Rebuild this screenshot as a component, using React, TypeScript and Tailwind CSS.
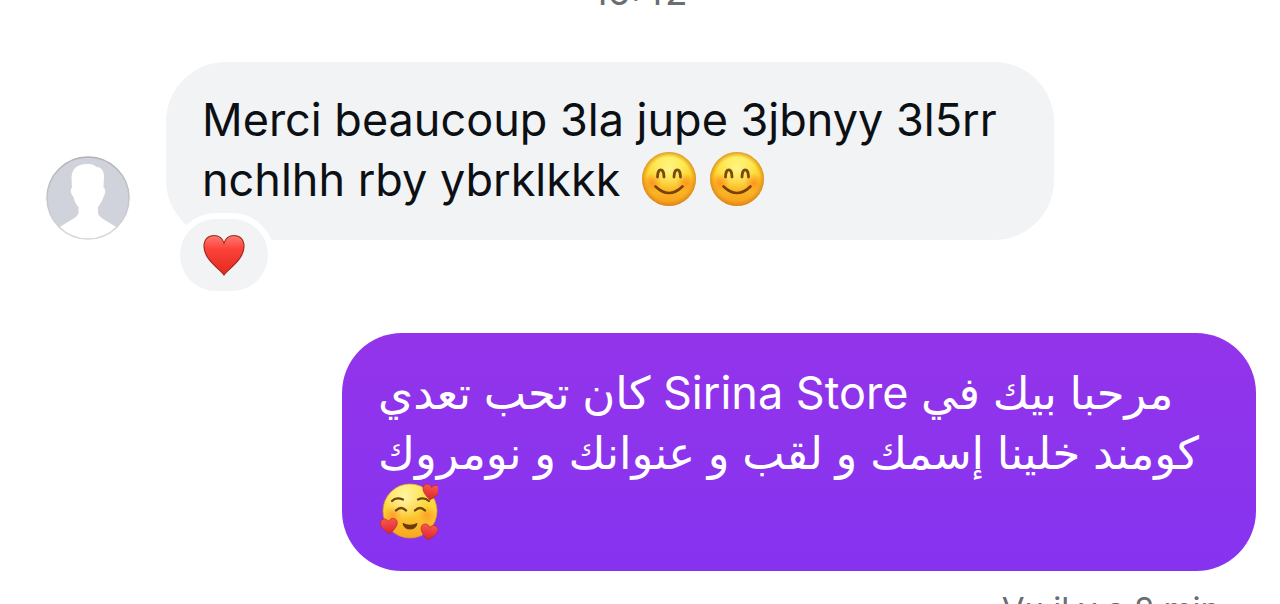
import React from "react";

interface EmojiProps {
  className?: string;
}

function DefaultAvatar() {
  return (
    <svg viewBox="0 0 84 84" role="img" aria-label="Photo de profil" className="w-[84px] h-[84px] shrink-0">
      <defs>
        <clipPath id="avatar-clip">
          <circle cx="42" cy="42" r="41" />
        </clipPath>
        <linearGradient id="avatar-ring" x1="0" y1="0" x2="0" y2="1">
          <stop offset="0" stopColor="#b0b1b6" />
          <stop offset="1" stopColor="#d8d8da" />
        </linearGradient>
      </defs>
      <circle cx="42" cy="42" r="41" fill="#d0d3dc" />
      <path
        clipPath="url(#avatar-clip)"
        fill="#fff"
        d="M41 8C46 7.500 49 9 50.500 11C55.500 11 58 15 58 21L57.500 32C60 32 59.500 38 57.500 41C56 46 54 48 52 51V57C52 62 64 66 70 71L84 84H0L14 71C20 66 32 62 32.500 57V51C30 48 28.500 46 27.500 41C24.500 38 24 32 26 32L25.500 22C26 12 31 8.500 41 8Z"
      />
      <circle cx="42" cy="42" r="41" fill="none" stroke="url(#avatar-ring)" strokeWidth="1.500" />
    </svg>
  );
}

function SmileEmoji({ className }: EmojiProps) {
  return (
    <svg viewBox="0 0 56 56" role="img" aria-label="😊" className={className}>
      <defs>
        <linearGradient id="smile-face" x1="0" y1="0" x2="0" y2="1">
          <stop offset="0" stopColor="#fdf04a" />
          <stop offset="0.45" stopColor="#fdd42e" />
          <stop offset="1" stopColor="#f79a1c" />
        </linearGradient>
        <radialGradient id="smile-glow" cx="0.5" cy="0.3" r="0.4">
          <stop offset="0" stopColor="#fffb9a" stopOpacity="0.8" />
          <stop offset="1" stopColor="#fffb9a" stopOpacity="0" />
        </radialGradient>
        <radialGradient id="smile-shade">
          <stop offset="0.8" stopColor="#e88b10" stopOpacity="0" />
          <stop offset="1" stopColor="#d07a1c" stopOpacity="0.75" />
        </radialGradient>
        <radialGradient id="smile-cheek">
          <stop offset="0" stopColor="#fb7a18" stopOpacity="0.65" />
          <stop offset="1" stopColor="#fb7a18" stopOpacity="0" />
        </radialGradient>
      </defs>
      <circle cx="28" cy="27" r="27" fill="url(#smile-face)" />
      <circle cx="28" cy="27" r="27" fill="url(#smile-glow)" />
      <circle cx="11" cy="31" r="10" fill="url(#smile-cheek)" />
      <circle cx="45" cy="31" r="10" fill="url(#smile-cheek)" />
      <circle cx="28" cy="27" r="27" fill="url(#smile-shade)" />
      <path
        d="M16.500 25C16.500 15.500 23 15.500 23 25M33 25C33 15.500 39.500 15.500 39.500 25"
        fill="none"
        stroke="#7a4a0c"
        strokeWidth="2.800"
        strokeLinecap="round"
      />
      <path d="M14.500 34.500Q28 47.500 41.500 34.500" fill="none" stroke="#7a400a" strokeWidth="2.600" strokeLinecap="round" />
    </svg>
  );
}

function SmallHeart({ transform }: { transform: string }) {
  return (
    <g transform={transform}>
      <path
        d="M0 8C-4 5 -8.500 1 -8.500 -3C-8.500 -8 -2 -9 0 -4.500C2 -9 8.500 -8 8.500 -3C8.500 1 4 5 0 8Z"
        fill="url(#love-heart)"
        stroke="#b92326"
        strokeWidth="0.600"
      />
    </g>
  );
}

function LoveEmoji({ className }: EmojiProps) {
  return (
    <svg viewBox="0 0 60 60" role="img" aria-label="🥰" className={className}>
      <defs>
        <linearGradient id="love-face" x1="0" y1="0" x2="0" y2="1">
          <stop offset="0" stopColor="#fdec56" />
          <stop offset="0.5" stopColor="#fdcf35" />
          <stop offset="1" stopColor="#f9a51f" />
        </linearGradient>
        <radialGradient id="love-glow" cx="0.4" cy="0.25" r="0.4">
          <stop offset="0" stopColor="#fffac0" stopOpacity="0.8" />
          <stop offset="1" stopColor="#fffac0" stopOpacity="0" />
        </radialGradient>
        <radialGradient id="love-cheek">
          <stop offset="0" stopColor="#fb8423" stopOpacity="0.6" />
          <stop offset="1" stopColor="#fb8423" stopOpacity="0" />
        </radialGradient>
        <linearGradient id="love-heart" x1="0" y1="0" x2="0" y2="1">
          <stop offset="0" stopColor="#f95650" />
          <stop offset="1" stopColor="#d8262c" />
        </linearGradient>
      </defs>
      <circle cx="32" cy="28" r="27" fill="url(#love-face)" stroke="#e09a22" strokeWidth="0.800" />
      <circle cx="32" cy="28" r="27" fill="url(#love-glow)" />
      <circle cx="15" cy="32" r="9" fill="url(#love-cheek)" />
      <circle cx="49" cy="32" r="9" fill="url(#love-cheek)" />
      <g fill="none" stroke="#6b430d" strokeLinecap="round">
        <path d="M14 18Q18 13.500 25 16.500M40 16.500Q46 13.500 51 18" strokeWidth="2.200" />
        <path d="M18 27.500Q23 22.500 28 27.500M37 27.500Q42 22.500 47 27.500" strokeWidth="2.400" />
      </g>
      <path d="M25 40.500Q32 44 39 40.500Q38 46 32 46Q26 46 25 40.500Z" fill="#6b3a0c" stroke="#6b3a0c" strokeLinejoin="round" />
      <SmallHeart transform="translate(53 9) rotate(8)" />
      <SmallHeart transform="translate(11 43) rotate(-4)" />
      <SmallHeart transform="translate(51 49) rotate(10)" />
    </svg>
  );
}

function HeartEmoji({ className }: EmojiProps) {
  return (
    <svg viewBox="0 0 42 42" role="img" aria-label="❤️" className={className}>
      <defs>
        <linearGradient id="heart-fill" x1="0" y1="0" x2="0" y2="1">
          <stop offset="0" stopColor="#ff7a6e" />
          <stop offset="0.35" stopColor="#fb4238" />
          <stop offset="1" stopColor="#e32a20" />
        </linearGradient>
      </defs>
      <path
        d="M21 41C18 36 1 26 1 12.500C1 5 5.500 1.500 11 1.500C16 1.500 19.500 4.500 21 9C22.500 4.500 26 1.500 31 1.500C36.500 1.500 41 5 41 12.500C41 26 24 36 21 41Z"
        fill="url(#heart-fill)"
        stroke="#a52a24"
        strokeWidth="1.200"
      />
    </svg>
  );
}

export default function App() {
  return (
    <main className="h-screen overflow-hidden bg-white font-['Inter','DejaVu_Sans',sans-serif] text-[45px] leading-[60px]">
      {/* Time separator, partly scrolled out of view */}
      <div className="-mt-[30px] mb-12 text-center text-[37px] leading-[44px] text-[#6a6d72]">
        <time>16:42</time>
      </div>

      {/* Received message */}
      <section className="flex items-end gap-9 pl-[46px] pr-6">
        <DefaultAvatar />
        <div className="relative w-full max-w-[888px] rounded-[60px] bg-[#f2f3f5] px-9 pt-7 pb-[30px] text-[#0c1014]">
          <p>
            Merci beaucoup 3la jupe 3jbnyy 3l5rr
            <br />
            nchlhh rby ybrklkkk{" "}
            <span className="inline-flex h-[60px] items-center gap-3 pl-2 align-top">
              <SmileEmoji className="w-14 h-14" />
              <SmileEmoji className="w-14 h-14" />
            </span>
          </p>
          <button className="absolute -bottom-[57px] left-2 flex items-center justify-center w-[100px] h-[84px] rounded-full border-[6px] border-white bg-[#f2f3f5]">
            <HeartEmoji className="w-[42px] h-[42px]" />
          </button>
        </div>
      </section>

      {/* Sent message */}
      <section className="mt-[93px] flex justify-end pl-12 pr-6">
        <div className="w-full max-w-[914px] rounded-[60px] bg-gradient-to-b from-[#9334ea] to-[#8633f0] px-9 pt-[30px] pb-7 text-white">
          {/* Right-to-left reading order, but flush with the left side of the bubble */}
          <p dir="rtl" lang="ar" className="text-left">
            مرحبا بيك في Sirina Store كان تحب تعدي
            <br />
            كومند خلينا إسمك و لقب و عنوانك و نومروك
            <br />
            <LoveEmoji className="inline-block w-[60px] h-[60px] align-top" />
          </p>
        </div>
      </section>

      <p className="mt-[18px] pr-[60px] text-right text-[33px] leading-[40px] text-[#6a6d72]">Vu il y a 2 min</p>
    </main>
  );
}
